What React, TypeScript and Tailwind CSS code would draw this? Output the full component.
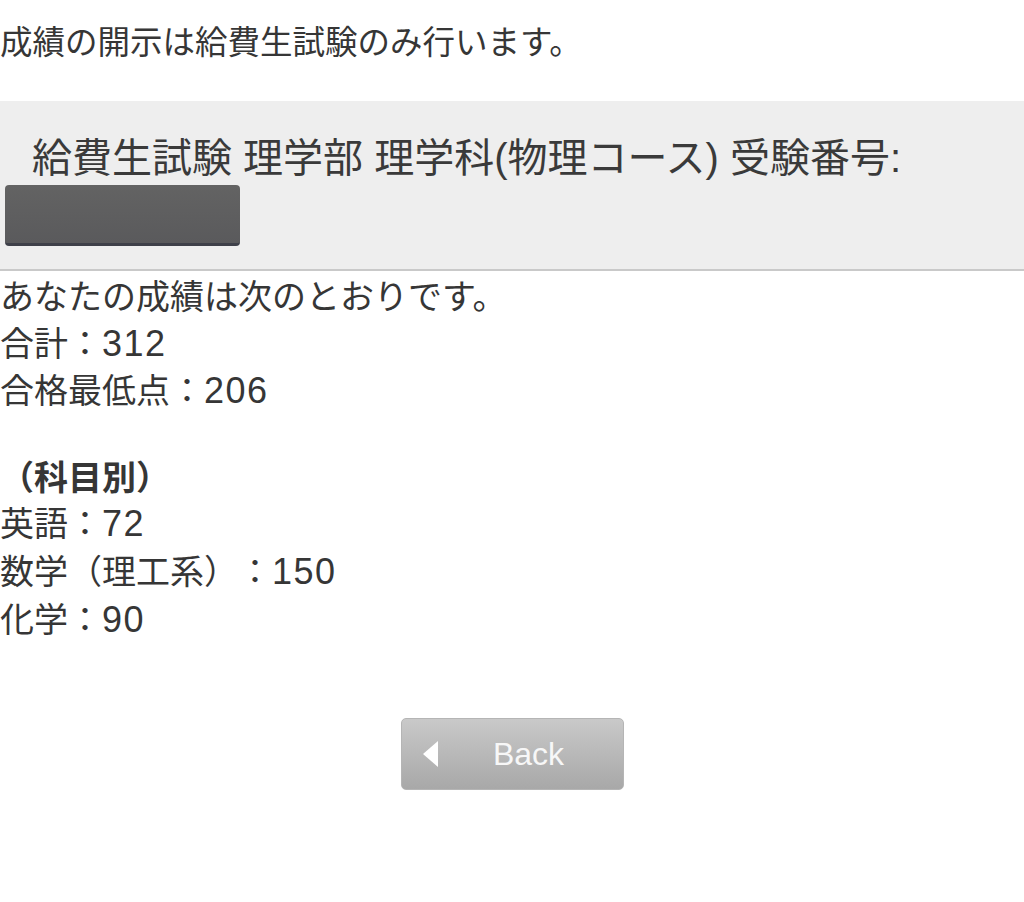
const rows = [
  { label: "合計", value: "312" },
  { label: "合格最低点", value: "206" },
];

const subjects = [
  { label: "英語", value: "72" },
  { label: "数学（理工系）", value: "150" },
  { label: "化学", value: "90" },
];

function Line({
  label,
  value,
  h,
}: {
  label: string;
  value: string;
  h: string;
}) {
  return (
    <p className={h}>
      {label}：
      <span className="text-[36px] leading-none tracking-[1.5px] font-['Liberation_Sans',sans-serif]">
        {value}
      </span>
    </p>
  );
}

export default function App() {
  return (
    <div className="min-h-[902px] bg-white text-[#363636] font-['Liberation_Sans','Noto_Sans_CJK_JP',sans-serif] [text-spacing-trim:space-all]">
      <p className="pt-[20px] h-[101px] text-[32.5px] leading-[47px]">
        成績の開示は給費生試験のみ行います。
      </p>

      <div className="h-[170px] bg-[#eeeeee] border-b-2 border-[#c9c9c9] pt-[34px]">
        <h2 className="pl-[32px] text-[40px] leading-[46px] text-[#3a3a3a]">
          給費生試験 理学部 理学科(物理コース) 受験番号:
        </h2>
        <div className="ml-[5px] mt-[4px] w-[235px] h-[61px] rounded-[4px] bg-gradient-to-b from-[#636363] to-[#5a5a5c] border-b-[3px] border-[#3e4049]" />
      </div>

      <div className="pt-[3px] text-[34px] leading-[47px]">
        <p>あなたの成績は次のとおりです。</p>
        {rows.map((r) => (
          <Line key={r.label} label={r.label} value={r.value} h="h-[47px]" />
        ))}
        <p className="h-[40px]" />
        <p className="h-[46px] font-bold">（科目別）</p>
        {subjects.map((s) => (
          <Line key={s.label} label={s.label} value={s.value} h="h-[48px]" />
        ))}
      </div>

      <div className="flex justify-center mt-[73px] pl-[1px]">
        <button className="relative w-[223px] h-[72px] rounded-[5px] bg-gradient-to-b from-[#c9c9c9] to-[#a8a8a8] border border-[#b5b5b5] text-[#f7f7f7] text-[32px] font-['Liberation_Sans',sans-serif]">
          <span className="absolute left-[21px] top-[22px] w-0 h-0 border-y-[13px] border-y-transparent border-r-[15px] border-r-white" />
          <span className="pl-[32px]">Back</span>
        </button>
      </div>
    </div>
  );
}
